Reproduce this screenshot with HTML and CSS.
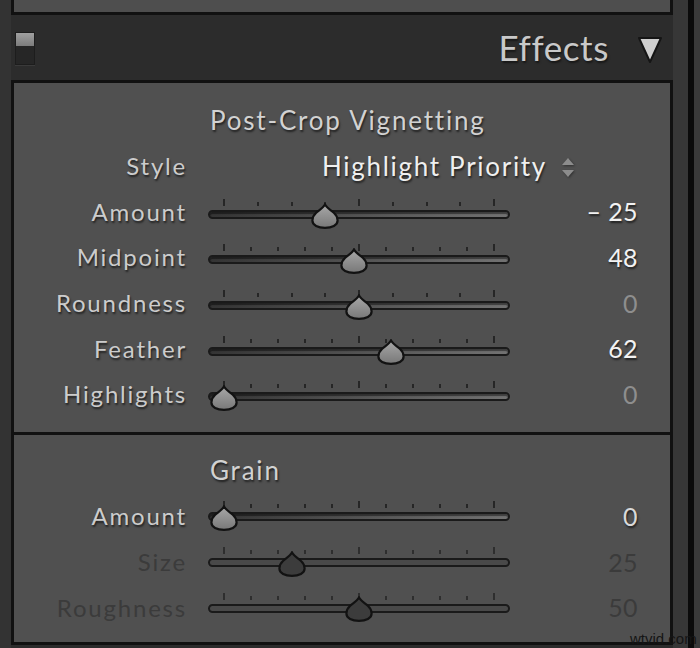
FILE: index.html
```html
<!DOCTYPE html>
<html>
<head>
<meta charset="utf-8">
<link rel="stylesheet" href="styles.css">
</head>
<body>
<div class="screen">
  <div class="edge-left"></div>
  <div class="column">
    <div class="panel-top"></div>
    <div class="header">
      <div class="toggle"><span class="toggle-on"></span><span class="toggle-off"></span></div>
      <div class="header-title">Effects</div>
      <svg class="collapse" width="26" height="28" viewBox="0 0 26 28"><path d="M2 2 L24 2 L13 26 Z" fill="#cfcfcf" stroke="#151515" stroke-width="2" stroke-linejoin="round"/></svg>
    </div>
    <div class="panel">
      <section class="group group-vignette">
        <div class="row title-row"><span></span><h2 class="group-title">Post-Crop Vignetting</h2></div>
        <div class="row">
          <span class="label">Style</span>
          <div class="popup"><span class="popup-text">Highlight Priority</span>
            <svg class="updown" width="16" height="22" viewBox="0 0 16 22"><path d="M8 1 L14 8 L2 8 Z" fill="#8c8c8c"/><path d="M2 13 L14 13 L8 20 Z" fill="#8c8c8c"/></svg>
          </div>
        </div>
        <div class="row">
          <span class="label">Amount</span>
          <div class="slider">
            <div class="ticks"><i class="major"></i><i></i><i></i><i></i><i class="major"></i><i></i><i></i><i></i><i class="major"></i></div>
            <div class="track"></div>
            <svg class="thumb" style="--pos:0.375" viewBox="0 0 28 26"><use href="#drop"/></svg>
          </div>
          <span class="value">– 25</span>
        </div>
        <div class="row">
          <span class="label">Midpoint</span>
          <div class="slider">
            <div class="ticks"><i class="major"></i><i></i><i></i><i></i><i></i><i class="major"></i><i></i><i></i><i></i><i></i><i class="major"></i></div>
            <div class="track"></div>
            <svg class="thumb" style="--pos:0.48" viewBox="0 0 28 26"><use href="#drop"/></svg>
          </div>
          <span class="value">48</span>
        </div>
        <div class="row">
          <span class="label">Roundness</span>
          <div class="slider">
            <div class="ticks"><i class="major"></i><i></i><i></i><i></i><i class="major"></i><i></i><i></i><i></i><i class="major"></i></div>
            <div class="track"></div>
            <svg class="thumb" style="--pos:0.5" viewBox="0 0 28 26"><use href="#drop"/></svg>
          </div>
          <span class="value value-zero">0</span>
        </div>
        <div class="row">
          <span class="label">Feather</span>
          <div class="slider">
            <div class="ticks"><i class="major"></i><i></i><i></i><i></i><i></i><i class="major"></i><i></i><i></i><i></i><i></i><i class="major"></i></div>
            <div class="track"></div>
            <svg class="thumb" style="--pos:0.62" viewBox="0 0 28 26"><use href="#drop"/></svg>
          </div>
          <span class="value">62</span>
        </div>
        <div class="row">
          <span class="label">Highlights</span>
          <div class="slider">
            <div class="ticks"><i class="major"></i><i></i><i></i><i></i><i></i><i class="major"></i><i></i><i></i><i></i><i></i><i class="major"></i></div>
            <div class="track"></div>
            <svg class="thumb" style="--pos:0" viewBox="0 0 28 26"><use href="#drop"/></svg>
          </div>
          <span class="value value-zero">0</span>
        </div>
      </section>
      <section class="group group-grain">
        <div class="row title-row"><span></span><h2 class="group-title">Grain</h2></div>
        <div class="row">
          <span class="label">Amount</span>
          <div class="slider">
            <div class="ticks"><i class="major"></i><i></i><i></i><i></i><i></i><i class="major"></i><i></i><i></i><i></i><i></i><i class="major"></i></div>
            <div class="track"></div>
            <svg class="thumb" style="--pos:0" viewBox="0 0 28 26"><use href="#drop"/></svg>
          </div>
          <span class="value value-light">0</span>
        </div>
        <div class="row disabled">
          <span class="label">Size</span>
          <div class="slider">
            <div class="ticks"><i class="major"></i><i></i><i></i><i></i><i></i><i class="major"></i><i></i><i></i><i></i><i></i><i class="major"></i></div>
            <div class="track"></div>
            <svg class="thumb" style="--pos:0.25" viewBox="0 0 28 26"><use href="#drop"/></svg>
          </div>
          <span class="value">25</span>
        </div>
        <div class="row disabled">
          <span class="label">Roughness</span>
          <div class="slider">
            <div class="ticks"><i class="major"></i><i></i><i></i><i></i><i></i><i class="major"></i><i></i><i></i><i></i><i></i><i class="major"></i></div>
            <div class="track"></div>
            <svg class="thumb" style="--pos:0.5" viewBox="0 0 28 26"><use href="#drop"/></svg>
          </div>
          <span class="value">50</span>
        </div>
      </section>
    </div>
  </div>
  <div class="edge-right"><div class="edge-right-a"></div><div class="edge-right-b"></div><div class="edge-right-c"></div></div>
</div>
<div class="watermark">wtvid.com</div>
<svg class="defs" width="0" height="0">
  <defs>
    <linearGradient id="dropfill" x1="0" y1="0" x2="0" y2="1">
      <stop offset="0" stop-color="#a8a8a8"/>
      <stop offset="1" stop-color="#787878"/>
    </linearGradient>
    <path id="drop" d="M14 1.5 C15.5 4.5 19.5 7 23 10 C25.8 12.5 26.6 15 26.6 17.5 C26.6 22.2 21 24.8 14 24.8 C7 24.8 1.4 22.2 1.4 17.5 C1.4 15 2.2 12.5 5 10 C8.5 7 12.5 4.5 14 1.5 Z"/>
  </defs>
</svg>
</body>
</html>
```
FILE: styles.css
```css
html, body {
  margin: 0;
  padding: 0;
}
body {
  width: 700px;
  height: 648px;
  overflow: hidden;
  background: #2c2c2c;
  font-family: Lato, "Liberation Sans", sans-serif;
  position: relative;
}
.screen {
  display: flex;
  height: 648px;
}
.edge-left {
  width: 11px;
  background: #333333;
}
.column {
  width: 662px;
  display: flex;
  flex-direction: column;
  background: #2c2c2c;
}
.panel-top {
  height: 12px;
  background: #4e4e4e;
  border: 3px solid #111;
  border-top: 0;
}
.header {
  height: 65px;
  display: flex;
  align-items: center;
}
.toggle {
  width: 20px;
  height: 33px;
  margin-left: 4px;
  margin-top: 2px;
  display: flex;
  flex-direction: column;
  border: 1px solid #1d1d1d;
  box-sizing: border-box;
  box-shadow: 0 1px 0 #3a3a3a;
}
.toggle-on {
  height: 13px;
  background: linear-gradient(#a0a0a0, #7c7c7c);
}
.toggle-off {
  flex: 1;
  background: #262626;
}
.header-title {
  margin-left: auto;
  font-size: 35px;
  letter-spacing: 0.6px;
  color: #c9c9c9;
  text-shadow: 1px 2px 2px rgba(0,0,0,0.5);
  padding-bottom: 1px;
}
.collapse {
  display: block;
  margin-left: 28px;
  margin-right: 10px;
  margin-top: 5px;
}
.panel {
  flex: 1;
  display: flex;
  flex-direction: column;
  border: 3px solid #111;
  margin-bottom: 3px;
  background: #505050;
}
.group-vignette {
  padding: 15px 0 13px;
  border-bottom: 3px solid #111;
}
.group-grain {
  padding: 13px 0 11px;
}
.row {
  display: grid;
  grid-template-columns: 194px 302px 128px;
  height: 45.6px;
  align-items: center;
}
.title-row {
  height: 47px;
}
.group-grain .title-row {
  height: 45.6px;
}
.label {
  text-align: right;
  padding-right: 21px;
  font-size: 24px;
  letter-spacing: 1.8px;
  color: #cccccc;
  text-shadow: 1px 2px 2px rgba(0,0,0,0.6);
  white-space: nowrap;
}
.group-title {
  margin: 0;
  font-weight: normal;
  font-size: 26px;
  letter-spacing: 1.8px;
  color: #d2d2d2;
  text-shadow: 1px 2px 2px rgba(0,0,0,0.6);
  padding-left: 2px;
  white-space: nowrap;
}
.popup {
  grid-column: 2 / 4;
  display: flex;
  align-items: center;
  padding-left: 114px;
}
.popup-text {
  font-size: 26px;
  letter-spacing: 1.7px;
  color: #efefef;
  text-shadow: 1px 2px 2px rgba(0,0,0,0.6);
  white-space: nowrap;
}
.group-vignette .label,
.group-vignette .value,
.group-vignette .group-title,
.group-vignette .popup-text {
  padding-bottom: 4px;
}
.updown {
  display: block;
  margin-left: 13px;
  filter: drop-shadow(1px 1px 1px rgba(0,0,0,0.4));
}
.slider {
  position: relative;
  height: 100%;
  display: flex;
  flex-direction: column;
  justify-content: center;
  padding: 2px 0 11px;
  box-sizing: border-box;
}
.ticks {
  height: 7px;
  margin-bottom: 4px;
  display: flex;
  justify-content: space-between;
  align-items: flex-end;
  padding: 0 15px;
}
.ticks i {
  display: block;
  width: 2px;
  height: 4px;
  background: #262626;
}
.ticks i.major {
  height: 7px;
}
.track {
  height: 9px;
  box-sizing: border-box;
  border: 2px solid #1a1a1a;
  border-radius: 5px;
  background: linear-gradient(90deg, #343434, #727272);
  box-shadow: inset 0 2px 1px rgba(0,0,0,0.45);
}
.thumb {
  position: absolute;
  width: 28px;
  height: 26px;
  left: calc(16px + var(--pos) * 270px - 14px);
  top: 12px;
  fill: url(#dropfill);
  stroke: #121212;
  stroke-width: 2.2;
}
.value {
  text-align: right;
  font-size: 25px;
  letter-spacing: 0.4px;
  color: #f2f2f2;
  text-shadow: 1px 2px 2px rgba(0,0,0,0.6);
}
.value-zero {
  color: #8e8e8e;
  text-shadow: none;
}
.value-light {
  color: #d9d9d9;
}
.disabled .label,
.disabled .value {
  color: #3b3b3b;
  text-shadow: none;
}
.disabled .track {
  background: #494949;
  box-shadow: none;
}
.disabled .thumb {
  fill: #3c3c3c;
}
.disabled .ticks i {
  background: #2e2e2e;
}
.edge-right {
  flex: 1;
  display: flex;
}
.edge-right-a {
  width: 15px;
  background: #373737;
}
.edge-right-b {
  width: 6px;
  background: #0b0b0b;
}
.edge-right-c {
  flex: 1;
  background: #3a3a3a;
}
.watermark {
  position: absolute;
  left: 630px;
  top: 630px;
  font-family: "Liberation Sans", Arial, sans-serif;
  font-size: 15px;
  color: #151515;
}
.defs {
  position: absolute;
}
```
